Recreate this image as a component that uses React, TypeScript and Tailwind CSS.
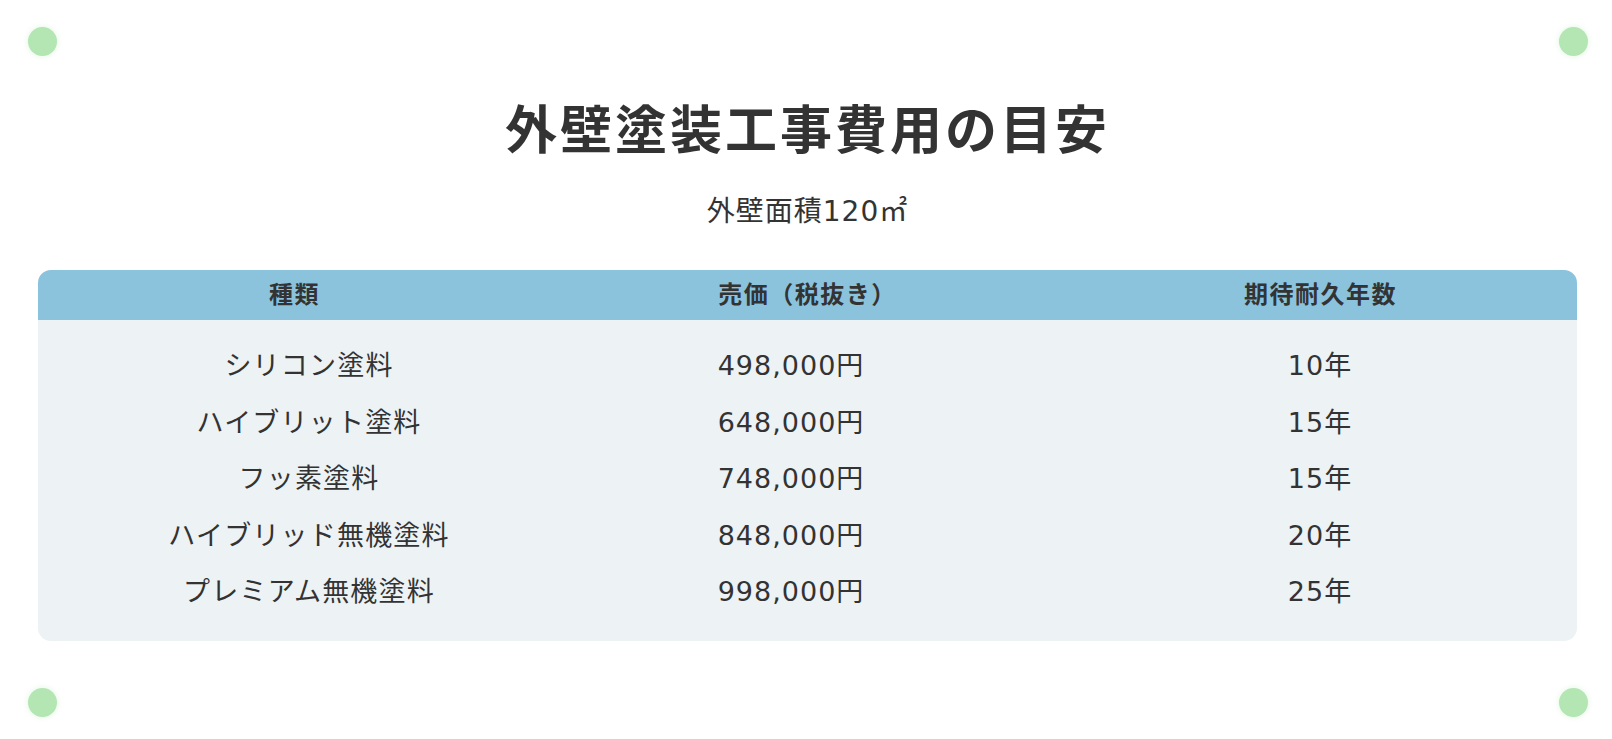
import React from "react";

const rows = [
  ["シリコン塗料", "498,000円", "10年"],
  ["ハイブリット塗料", "648,000円", "15年"],
  ["フッ素塗料", "748,000円", "15年"],
  ["ハイブリッド無機塗料", "848,000円", "20年"],
  ["プレミアム無機塗料", "998,000円", "25年"],
];

function Dot() {
  return <div className="h-[29px] w-[29px] rounded-full bg-[#b3e6b3] shadow-[0_0_6px_rgba(179,230,179,0.4)]" />;
}

export default function App() {
  return (
    <div
      className="flex min-h-[739px] flex-col bg-white text-[#333333]"
      style={{ fontFamily: '"DejaVu Sans", "Noto Sans CJK JP", sans-serif' }}
    >
      <div className="flex justify-between pl-[28px] pr-[24px] pt-[27px]">
        <Dot />
        <Dot />
      </div>

      <div className="flex flex-col pl-[38px] pr-[35px] pt-[44px]">
        <h1
          className="h-[54px] text-center text-[52px] font-bold leading-[54px] tracking-[3px] text-[#333333]"
          style={{ fontFamily: '"Noto Sans CJK JP", sans-serif' }}
        >
          外壁塗装工事費用の目安
        </h1>
        <p className="mt-[43px] h-[30px] text-center text-[28px] leading-[30px] tracking-[1px]">
          外壁面積120㎡
        </p>

        <div className="mt-[43px] overflow-hidden rounded-[13px] bg-[#edf2f5]">
          <div className="grid h-[50px] grid-cols-3 items-center bg-[#8bc3dd] text-center text-[24px] font-bold tracking-[1.5px]">
            <div>種類</div>
            <div>売価（税抜き）</div>
            <div>期待耐久年数</div>
          </div>
          <div className="grid grid-cols-[420px_544px_1fr] pl-[61px] pt-[18px] pb-[20px] text-[27px]">
            {rows.map((r) => (
              <React.Fragment key={r[0]}>
                <div className="flex h-[56.5px] items-center justify-center tracking-[1.2px]">{r[0]}</div>
                <div className="flex h-[56.5px] items-center justify-center tracking-[1px]">{r[1]}</div>
                <div className="flex h-[56.5px] items-center justify-center tracking-[1px]">{r[2]}</div>
              </React.Fragment>
            ))}
          </div>
        </div>
      </div>

      <div className="mt-auto flex justify-between pl-[28px] pr-[24px] pb-[24px] pt-[47px]">
        <Dot />
        <Dot />
      </div>
    </div>
  );
}
